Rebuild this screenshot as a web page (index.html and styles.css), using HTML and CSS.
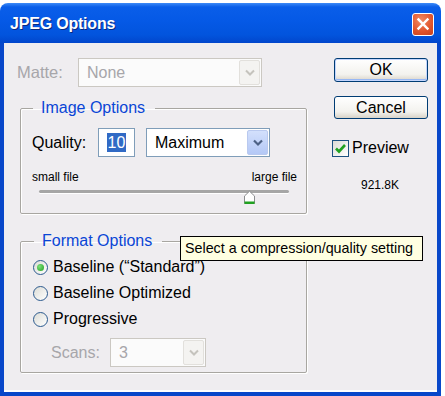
FILE: index.html
```html
<!DOCTYPE html>
<html lang="en">
<head>
  <meta charset="UTF-8">
  <meta name="viewport" content="width=device-width, initial-scale=1.0">
  <title>JPEG Options</title>
  <link rel="stylesheet" href="styles.css">
</head>
<body>

<div class="window">
  <div class="titlebar">
    <span class="title">JPEG Options</span>
    <span class="close">
      <svg width="22" height="22" viewBox="0 0 22 22"><path d="M6 6 L16 16 M16 6 L6 16" stroke="#fff" stroke-width="2.6" stroke-linecap="square"/></svg>
    </span>
  </div>

  <div class="frame">
    <div class="main">
      <div class="field-row matte-row">
        <span class="label matte-label disabled">Matte:</span>
        <div class="select matte-select disabled">
          <span class="select-value">None</span>
          <span class="arrow"><svg width="12" height="8" viewBox="0 0 12 8"><path d="M2 1.5 L6 5.5 L10 1.5" fill="none" stroke="#c5c3bd" stroke-width="2"/></svg></span>
        </div>
      </div>

      <!-- Image Options -->
      <fieldset class="group image-group">
        <legend>Image Options</legend>
        <div class="field-row">
          <span class="label quality-label">Quality:</span>
          <div class="text-input"><span class="selected-text">10</span></div>
          <div class="select quality-select">
            <span class="select-value">Maximum</span>
            <span class="arrow"><svg width="12" height="8" viewBox="0 0 12 8"><path d="M2 1.5 L6 5.5 L10 1.5" fill="none" stroke="#4d6185" stroke-width="2.2"/></svg></span>
          </div>
        </div>
        <div class="range-labels">
          <span>small file</span>
          <span>large file</span>
        </div>
        <div class="slider">
          <div class="track"></div>
          <svg class="thumb" width="13" height="15" viewBox="0 0 13 15">
            <path d="M1.5 13.5 V6 L6.5 1.2 L11.5 6 V13.5 Z" fill="#fff" stroke="#8b8d8f" stroke-width="1"/>
            <rect x="1.5" y="11.5" width="10" height="2.5" fill="#21a121"/>
          </svg>
        </div>
      </fieldset>

      <!-- Format Options -->
      <fieldset class="group format-group">
        <legend>Format Options</legend>
        <div class="radio-row"><span class="radio checked"></span>Baseline (“Standard”)</div>
        <div class="radio-row"><span class="radio"></span>Baseline Optimized</div>
        <div class="radio-row"><span class="radio"></span>Progressive</div>
        <div class="field-row scans-row">
          <span class="label scans-label disabled">Scans:</span>
          <div class="select scans-select disabled">
            <span class="select-value">3</span>
            <span class="arrow"><svg width="12" height="8" viewBox="0 0 12 8"><path d="M2 1.5 L6 5.5 L10 1.5" fill="none" stroke="#c5c3bd" stroke-width="2"/></svg></span>
          </div>
        </div>
      </fieldset>
    </div>

    <div class="side">
      <button class="btn default">OK</button>
      <button class="btn">Cancel</button>
      <div class="check-row">
        <span class="checkbox">
          <svg width="15" height="15" viewBox="0 0 15 15"><path d="M3 7.5 L6 10.5 L12 4" fill="none" stroke="#21a121" stroke-width="2.6"/></svg>
        </span>
        Preview
      </div>
      <div class="size">921.8K</div>
    </div>
  </div>
</div>

<div class="tooltip">Select a compression/quality setting</div>

</body>
</html>
```

FILE: styles.css
```css
* {
  box-sizing: border-box;
}
body {
  margin: 0;
  background: #fff;
  font-family: "Liberation Sans", Arial, sans-serif;
  font-size: 16px;
  color: #000;
}
.window {
  width: 441px;
  margin-top: 3px;
}
.titlebar {
  height: 40px;
  display: flex;
  align-items: center;
  justify-content: space-between;
  padding: 2px 7px 0 10px;
  border-radius: 8px 8px 0 0;
  background: linear-gradient(#3d8af7 0, #0a5ee9 4px, #0559e6 45%, #0254dd 80%, #0146cc 100%);
}
.title {
  color: #fff;
  font-weight: bold;
  font-size: 16px;
  letter-spacing: -0.2px;
  text-shadow: 1px 1px 0 #0a2a80;
}
.close {
  width: 22px;
  height: 23px;
  display: flex;
  align-items: center;
  justify-content: center;
  border: 1px solid #fff;
  border-radius: 3px;
  background: radial-gradient(circle at 40% 30%, #f08a64, #e0532a 60%, #c8401c);
}
.frame {
  display: flex;
  height: 353px;
  background: #efedf0;
  border: solid #0847c9;
  border-width: 0 4px 4px 4px;
  box-shadow: inset 0 -2px 0 #fff;
}
.main {
  width: 303px;
  padding-left: 13px;
}
.field-row {
  display: flex;
  align-items: center;
}
.label {
  flex-shrink: 0;
}
.disabled {
  color: #a7a6aa;
}
.matte-row {
  margin-top: 15px;
}
.matte-label {
  width: 61px;
  font-size: 16.5px;
}
.select {
  display: flex;
  align-items: center;
  justify-content: space-between;
  height: 29px;
  padding: 0 1px 0 8px;
  background: #fff;
  border: 1px solid #7f9db9;
}
.select.disabled {
  border-color: #cbc8c2;
  background: #fbfbfb;
}
.arrow {
  width: 21px;
  height: 25px;
  display: flex;
  align-items: center;
  justify-content: center;
  border: 1px solid #b9c9ef;
  border-radius: 2px;
  background: linear-gradient(#d3e0fc, #b4c8f6);
}
.disabled .arrow {
  border-color: #e2e0dc;
  background: #f4f3f1;
}
.matte-select {
  width: 184px;
}
.group {
  width: 287px;
  margin: 0 0 0 3px;
  border: 1px solid #a8a6a1;
  border-radius: 2px;
  box-shadow: 1px 1px 0 #fff, inset 1px 1px 0 #fff;
  min-width: 0;
}
.group legend {
  padding: 0 10px 0 8px;
  margin-left: 1px;
  line-height: 20px;
  color: #0a46d6;
}
.image-group {
  margin-top: 11px;
  padding: 10px 9px 9px 11px;
}
.quality-label {
  width: 66px;
}
.text-input {
  width: 37px;
  height: 29px;
  display: flex;
  align-items: center;
  justify-content: center;
  background: #fff;
  border: 1px solid #7f9db9;
}
.selected-text {
  background: #316ac5;
  color: #fff;
  padding: 0 1px;
  line-height: 19px;
}
.quality-select {
  width: 124px;
  margin-left: 11px;
}
.range-labels {
  display: flex;
  justify-content: space-between;
  margin-top: 13px;
  font-size: 12px;
  line-height: 14px;
}
.slider {
  position: relative;
  width: 250px;
  height: 14px;
  margin: 6px 0 0 7px;
}
.track {
  margin-top: 6px;
  height: 3px;
  border-radius: 2px;
  background: #a6a6a6;
  box-shadow: 0 1px 0 #fff;
}
.thumb {
  position: absolute;
  left: 204px;
  top: 0;
}
.format-group {
  margin-top: 17px;
  padding: 3px 9px 5px 12px;
}
.radio-row {
  display: flex;
  align-items: center;
  height: 26px;
}
.radio {
  width: 15px;
  height: 15px;
  margin-right: 5px;
  border: 1px solid #2c5a8e;
  border-radius: 50%;
  background: linear-gradient(135deg, #dcdcd6, #fff);
  display: flex;
  align-items: center;
  justify-content: center;
}
.radio.checked::after {
  content: "";
  width: 7px;
  height: 7px;
  border-radius: 50%;
  background: radial-gradient(circle at 35% 35%, #7de07a, #21a121);
}
.scans-row {
  margin-top: 6px;
}
.scans-label {
  width: 59px;
  padding-left: 18px;
  box-sizing: content-box;
}
.scans-select {
  width: 96px;
}
.side {
  width: 96px;
  margin-left: 25px;
  display: flex;
  flex-direction: column;
}
.btn {
  width: 94px;
  height: 24px;
  margin: 15px 0 0 2px;
  padding: 0;
  font-family: inherit;
  font-size: 16px;
  color: #000;
  border: 1px solid #003c74;
  border-radius: 3px;
  background: linear-gradient(#fff, #f3f2ee 70%, #d8d3c8);
}
.btn.default {
  box-shadow: inset 0 0 0 1px #c3d5fd, inset 0 -1px 0 1px #98b8f4;
}
.btn + .btn {
  margin-top: 14px;
  height: 23px;
}
.check-row {
  display: flex;
  align-items: center;
  margin-top: 20px;
  height: 18px;
}
.checkbox {
  width: 17px;
  height: 17px;
  margin-right: 3px;
  border: 1px solid #1c5180;
  background: linear-gradient(135deg, #dcdcd6, #fff);
  display: flex;
  align-items: center;
  justify-content: center;
}
.size {
  margin-top: 21px;
  text-align: center;
  font-size: 12px;
  line-height: 14px;
}
.tooltip {
  position: absolute;
  left: 180px;
  top: 236px;
  width: 243px;
  height: 25px;
  padding-left: 4px;
  background: #ffffe1;
  border: 1px solid #000;
  font-size: 14.3px;
  line-height: 23px;
  white-space: nowrap;
}
```
